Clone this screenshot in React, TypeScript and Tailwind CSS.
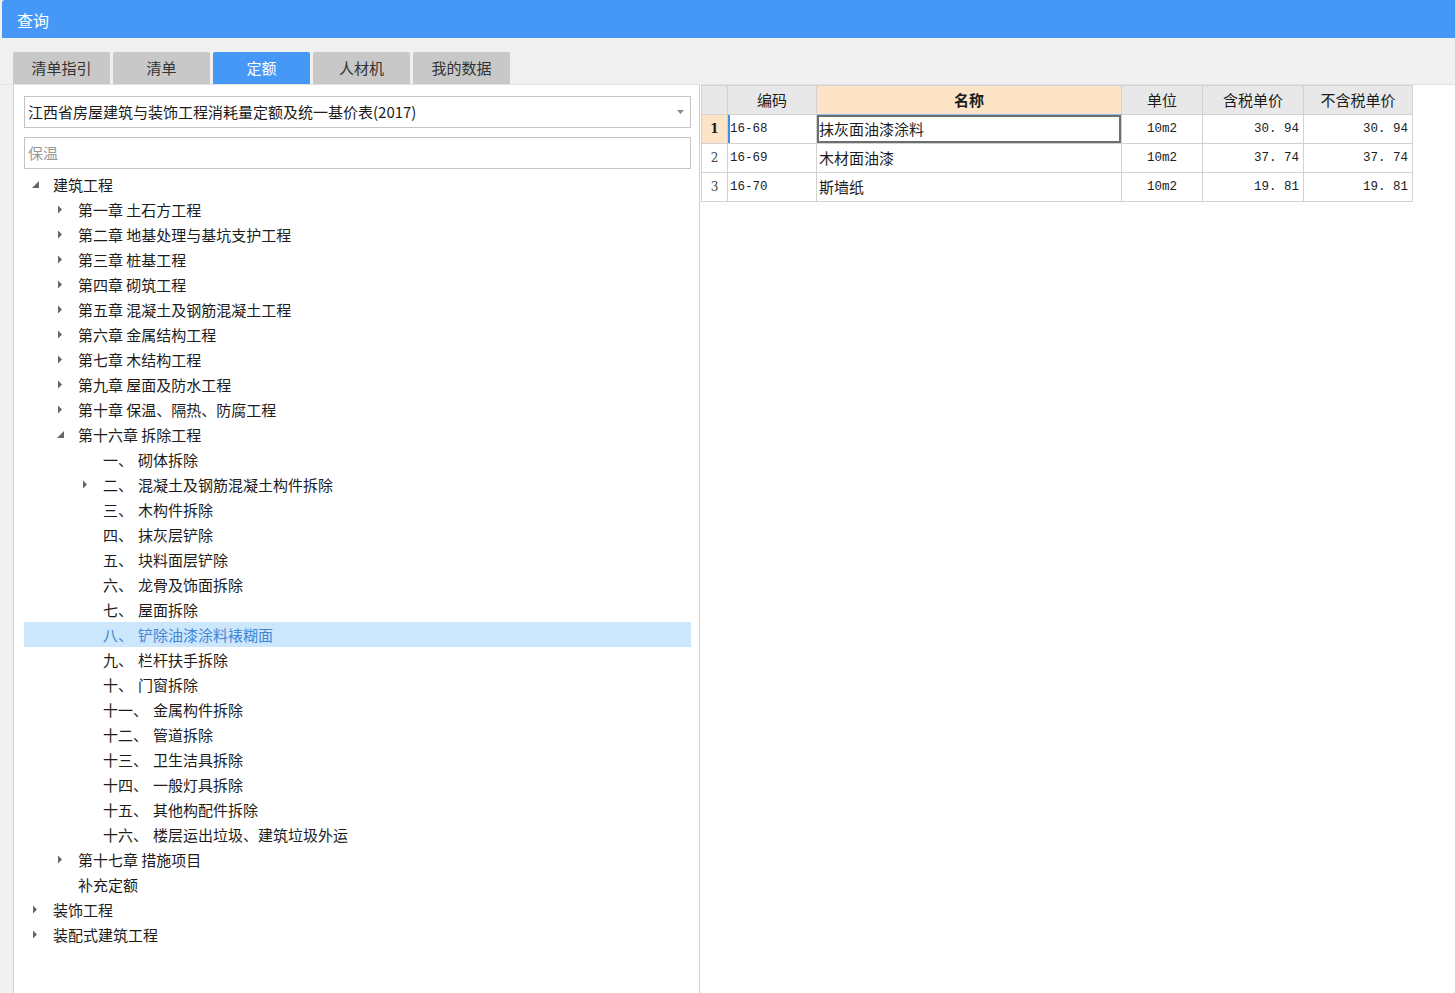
import React from "react";

type Node = { label: string; level: number; arrow?: "open" | "closed"; selected?: boolean };

const tree: Node[] = [
  { label: "建筑工程", level: 0, arrow: "open" },
  { label: "第一章 土石方工程", level: 1, arrow: "closed" },
  { label: "第二章 地基处理与基坑支护工程", level: 1, arrow: "closed" },
  { label: "第三章 桩基工程", level: 1, arrow: "closed" },
  { label: "第四章 砌筑工程", level: 1, arrow: "closed" },
  { label: "第五章 混凝土及钢筋混凝土工程", level: 1, arrow: "closed" },
  { label: "第六章 金属结构工程", level: 1, arrow: "closed" },
  { label: "第七章 木结构工程", level: 1, arrow: "closed" },
  { label: "第九章 屋面及防水工程", level: 1, arrow: "closed" },
  { label: "第十章 保温、隔热、防腐工程", level: 1, arrow: "closed" },
  { label: "第十六章 拆除工程", level: 1, arrow: "open" },
  { label: "一、 砌体拆除", level: 2 },
  { label: "二、 混凝土及钢筋混凝土构件拆除", level: 2, arrow: "closed" },
  { label: "三、 木构件拆除", level: 2 },
  { label: "四、 抹灰层铲除", level: 2 },
  { label: "五、 块料面层铲除", level: 2 },
  { label: "六、 龙骨及饰面拆除", level: 2 },
  { label: "七、 屋面拆除", level: 2 },
  { label: "八、 铲除油漆涂料裱糊面", level: 2, selected: true },
  { label: "九、 栏杆扶手拆除", level: 2 },
  { label: "十、 门窗拆除", level: 2 },
  { label: "十一、 金属构件拆除", level: 2 },
  { label: "十二、 管道拆除", level: 2 },
  { label: "十三、 卫生洁具拆除", level: 2 },
  { label: "十四、 一般灯具拆除", level: 2 },
  { label: "十五、 其他构配件拆除", level: 2 },
  { label: "十六、 楼层运出垃圾、建筑垃圾外运", level: 2 },
  { label: "第十七章 措施项目", level: 1, arrow: "closed" },
  { label: "补充定额", level: 1 },
  { label: "装饰工程", level: 0, arrow: "closed" },
  { label: "装配式建筑工程", level: 0, arrow: "closed" },
];

const rows = [
  { n: "1", code: "16-68", name: "抹灰面油漆涂料", unit: "10m2", tax: "30.94", notax: "30.94" },
  { n: "2", code: "16-69", name: "木材面油漆", unit: "10m2", tax: "37.74", notax: "37.74" },
  { n: "3", code: "16-70", name: "斯墙纸", unit: "10m2", tax: "19.81", notax: "19.81" },
];

const tabs = ["清单指引", "清单", "定额", "人材机", "我的数据"];

const cjk = "font-['Microsoft_YaHei','Noto_Sans_CJK_SC',sans-serif]";
const mono = "font-['Liberation_Mono','Noto_Sans_CJK_SC',monospace]";

const Arrow = ({ kind }: { kind?: "open" | "closed" }) => {
  if (kind === "closed")
    return (
      <svg width="6" height="9" viewBox="0 0 6 9">
        <path d="M1 0.5 L5 4.5 L1 8.5Z" fill="#666" />
      </svg>
    );
  if (kind === "open")
    return (
      <svg width="7" height="7" viewBox="0 0 7 7">
        <path d="M7 0 L7 7 L0 7Z" fill="#666" />
      </svg>
    );
  return null;
};

const TreeRow = ({ node }: { node: Node }) => {
  // 小节标题："一、 名称" 前缀与名称之间留一点空
  const idx = node.label.indexOf("、 ");
  const prefix = idx >= 0 && node.level === 2 ? node.label.slice(0, idx + 1) : null;
  const name = prefix ? node.label.slice(idx + 2) : node.label;
  return (
    <div
      className={`flex h-[25px] items-center ${node.selected ? "bg-[#cce6fc] text-[#3f86d6]" : "text-[#1c1c1c]"}`}
      style={{ paddingLeft: node.level * 25 }}
    >
      <div className="flex w-[29px] items-center justify-start pl-[8px]">
        <Arrow kind={node.arrow} />
      </div>
      <span className="whitespace-pre text-[15px] leading-[25px]">
        {prefix && <span className="mr-[5px]">{prefix}</span>}
        {name}
      </span>
    </div>
  );
};

export default function App() {
  return (
    <div className={`flex h-[993px] w-[1455px] flex-col overflow-hidden bg-[#f0f0f0] ${cjk}`}>
      <div className="ml-[2px] flex h-[38px] items-center rounded-tl-[3px] bg-[#4598f6] pl-[15px] pt-[2px] text-[16px] text-white">
        查询
      </div>

      <div className="flex h-[46px] gap-[3px] pl-[13px] pt-[14px]">
        {tabs.map((t) => (
          <div
            key={t}
            className={`flex h-[32px] w-[97px] items-center justify-center rounded-t-[2px] text-[15px] ${
              t === "定额" ? "bg-[#4598f6] text-white" : "bg-[#c8c8c8] text-[#333]"
            }`}
          >
            {t}
          </div>
        ))}
      </div>

      <div className="flex flex-1 border-t border-[#e2e2e2]">
        <div className="ml-[13px] flex w-[687px] flex-col border-l border-r border-[#cfcfcf] bg-white pl-[10px] pr-[8px] pt-[11px]">
          <div className="flex h-[32px] items-center justify-between border border-[#c4c4c4] pl-[3px] pr-[6px] text-[15px] text-[#1c1c1c]">
            <span>江西省房屋建筑与装饰工程消耗量定额及统一基价表(2017)</span>
            <svg width="7" height="4" viewBox="0 0 7 4">
              <path d="M0 0 L7 0 L3.5 4Z" fill="#8a8a8a" />
            </svg>
          </div>
          <div className="mt-[9px] flex h-[32px] items-center border border-[#c4c4c4] pl-[3px] text-[15px] text-[#9a9a9a]">
            保温
          </div>
          <div className="mt-[3px] flex flex-col">
            {tree.map((n) => (
              <TreeRow key={n.label} node={n} />
            ))}
          </div>
        </div>

        <div className="relative flex-1 bg-white pl-[1px]">
          <table className="table-fixed border-collapse text-[#1c1c1c]">
            <colgroup>
              <col className="w-[26px]" />
              <col className="w-[89px]" />
              <col className="w-[305px]" />
              <col className="w-[81px]" />
              <col className="w-[101px]" />
              <col className="w-[109px]" />
            </colgroup>
            <thead>
              <tr className="h-[29px] text-[15px]">
                <th className="border border-[#d2d2d2] bg-[#e8e8e8] font-normal"></th>
                <th className="border border-[#d2d2d2] bg-[#e8e8e8] font-normal">编码</th>
                <th className="border border-[#d2d2d2] border-b-[#8ec0ee] bg-[#fde4c6] font-bold">名称</th>
                <th className="border border-[#d2d2d2] bg-[#e8e8e8] font-normal">单位</th>
                <th className="border border-[#d2d2d2] bg-[#e8e8e8] font-normal">含税单价</th>
                <th className="border border-[#d2d2d2] bg-[#e8e8e8] font-normal">不含税单价</th>
              </tr>
            </thead>
            <tbody>
              {rows.map((r, i) => (
                <tr key={r.n} className="h-[29px]">
                  <td
                    className={`border border-[#d2d2d2] text-center font-['DejaVu_Serif',serif] text-[12px] ${
                      i === 0 ? "bg-[#fde4c6] font-bold" : "text-[#444]"
                    }`}
                  >
                    {r.n}
                  </td>
                  <td
                    className={`border border-[#d2d2d2] pl-[2px] ${mono} text-[12.5px] ${
                      i === 0 ? "shadow-[inset_2px_0_0_#3d8fe8]" : ""
                    }`}
                  >
                    {r.code}
                  </td>
                  <td
                    className={`border border-[#d2d2d2] pl-[2px] text-[15px] ${
                      i === 0 ? "shadow-[inset_0_0_0_2px_#6e6e6e]" : ""
                    }`}
                  >
                    {r.name}
                  </td>
                  <td className={`border border-[#d2d2d2] text-center ${mono} text-[12.5px]`}>{r.unit}</td>
                  <td className={`border border-[#d2d2d2] pr-[4px] text-right ${mono} text-[12.5px]`}>
                    {r.tax.replace(".", ". ")}
                  </td>
                  <td className={`border border-[#d2d2d2] pr-[4px] text-right ${mono} text-[12.5px]`}>
                    {r.notax.replace(".", ". ")}
                  </td>
                </tr>
              ))}
            </tbody>
          </table>
        </div>
      </div>
    </div>
  );
}
